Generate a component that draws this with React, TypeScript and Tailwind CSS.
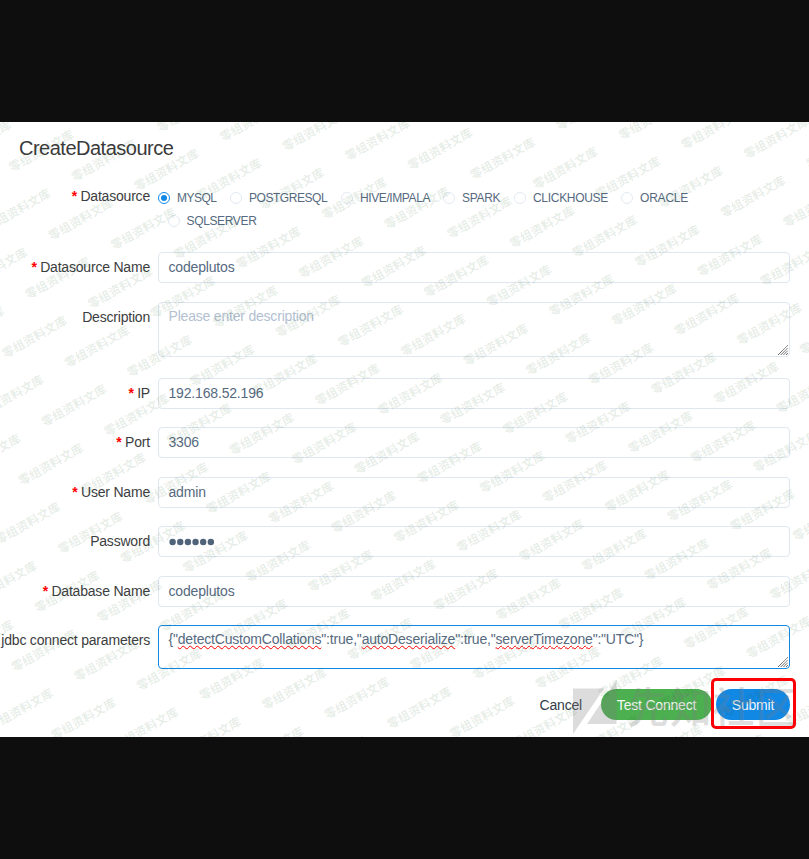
import React from "react";

function Radio({
  label,
  checked,
  className,
  tracking,
}: {
  label: string;
  checked?: boolean;
  className: string;
  tracking: string;
}) {
  return (
    <label className={`flex h-[22.5px] shrink-0 items-center ${className}`}>
      <span
        className={`mr-[7px] flex size-3 shrink-0 items-center justify-center rounded-full border ${
          checked ? "border-[#1288e5]" : "border-[#e3eaf3]"
        }`}
      >
        {checked && <span className="size-1.5 rounded-full bg-[#1288e5]" />}
      </span>
      <span className={`whitespace-nowrap text-[12px] text-[#566a80] ${tracking}`}>{label}</span>
    </label>
  );
}

function Row({
  label,
  required,
  className,
  children,
}: {
  label: string;
  required?: boolean;
  className: string;
  children: React.ReactNode;
}) {
  return (
    <div className={`flex items-start ${className}`}>
      <div className="flex h-[30px] w-[158px] shrink-0 items-center justify-end whitespace-nowrap pr-[8px] text-[14px] tracking-[-0.2px] text-[#3c3d40]">
        {required && <span className="mr-[3.5px] font-bold text-[#f00]">*</span>}
        {label}
      </div>
      {children}
    </div>
  );
}

function Field({ value }: { value: string }) {
  return (
    <div className="mr-[19px] flex h-[31px] flex-1 items-center rounded-[4px] border border-[#dfe7f1] px-[9.5px] text-[14px] tracking-[-0.17px] text-[#566a80]">
      {value}
    </div>
  );
}

function PasswordField({ length }: { length: number }) {
  return (
    <div className="mr-[19px] flex h-[31px] flex-1 items-center rounded-[4px] border border-[#dfe7f1] px-[10px] pt-[1px]">
      <svg width="46" height="8" viewBox="0 0 46 8" fill="#4f6379">
        {Array.from({ length }, (_, i) => (
          <circle key={i} cx={3.6 + i * 7.65} cy="4" r="3.2" />
        ))}
      </svg>
    </div>
  );
}

function Grip() {
  return (
    <svg className="absolute bottom-[1px] right-[1px]" width="10" height="10" viewBox="0 0 10 10">
      <path
        d="M0 10L10 0M2.7 10L10 2.7M5.4 10L10 5.4M8 10L10 8"
        stroke="#555"
        strokeWidth="1"
        strokeDasharray="1.2 0.3"
        fill="none"
      />
    </svg>
  );
}

function Typo({ children }: { children: string }) {
  return (
    <span className="underline decoration-[#f00] decoration-wavy decoration-[1.4px] underline-offset-[1px] [text-decoration-skip-ink:none]">
      {children}
    </span>
  );
}

const marks: [number, number][] = [];
for (let b = -3; b < 13; b++) {
  for (let a = -6; a < 22; a++) {
    const x = 15 + a * 62.6 - b * 23.15;
    const y = 43.3 + a * 9.52 + b * 58.9;
    if (x > -70 && x < 815 && y > -8 && y < 650) marks.push([x, y]);
  }
}

function Watermark() {
  return (
    <svg className="pointer-events-none absolute inset-0" width="809" height="615" viewBox="0 0 809 615">
      <g
        fill="rgba(20,85,30,0.115)"
        fontFamily="'Noto Sans CJK SC', sans-serif"
        fontSize="12"
        fontWeight="700"
      >
        {marks.map(([x, y]) => (
          <text key={`${x},${y}`} transform={`translate(${x} ${y}) rotate(-29.3)`} x="-6" y="4.6">
            零组资料文库
          </text>
        ))}
      </g>
      <g fill="rgba(125,125,125,0.27)">
        <path d="M573 566.5H604L573 612Z" />
        <path d="M587 602L616.5 558V602Z" />
        <text
          x="627"
          y="601"
          fontSize="42"
          fontWeight="500"
          letterSpacing="0.8"
          fontFamily="'Noto Sans CJK SC', sans-serif"
        >
          先知社区
        </text>
      </g>
    </svg>
  );
}

export default function App() {
  return (
    <div className="flex h-[859px] w-[809px] flex-col bg-[#0e0e0e] pt-[122px] font-['Liberation_Sans',Arial,sans-serif]">
      <main className="relative flex h-[615px] flex-col overflow-hidden bg-white">
        <h1 className="ml-[19px] mt-[14px] h-6 text-[20px] leading-6 tracking-[-0.5px] text-[#3a3a3a]">
          CreateDatasource
        </h1>

        <Row label="Datasource" required className="mt-[21px] h-[71px]">
          <div className="mt-[6px] flex flex-1 flex-col">
            <div className="flex">
              <Radio label="MYSQL" checked className="w-[72px]" tracking="tracking-[-0.5px]" />
              <Radio label="POSTGRESQL" className="w-[111px]" tracking="tracking-[-0.45px]" />
              <Radio label="HIVE/IMPALA" className="w-[102px]" tracking="tracking-[-0.4px]" />
              <Radio label="SPARK" className="w-[71px]" tracking="tracking-[-0.3px]" />
              <Radio label="CLICKHOUSE" className="w-[107px]" tracking="tracking-[-0.3px]" />
              <Radio label="ORACLE" className="" tracking="tracking-[-0.2px]" />
            </div>
            <Radio label="SQLSERVER" className="ml-[9.5px]" tracking="tracking-[-0.35px]" />
          </div>
        </Row>

        <Row label="Datasource Name" required className="h-[50px]">
          <Field value="codeplutos" />
        </Row>
        <Row label="Description" className="h-[76px]">
          <div className="relative mr-[19px] h-[55px] flex-1 rounded-[4px] border border-[#dfe7f1] px-[9.5px] pt-[4px] text-[14px] leading-[18px] tracking-[-0.2px] text-[#b3c0d1]">
            Please enter description
            <Grip />
          </div>
        </Row>
        <Row label="IP" required className="h-[49px]">
          <Field value="192.168.52.196" />
        </Row>
        <Row label="Port" required className="h-[50px]">
          <Field value="3306" />
        </Row>
        <Row label="User Name" required className="h-[49px]">
          <Field value="admin" />
        </Row>
        <Row label="Password" className="h-[50px]">
          <PasswordField length={6} />
        </Row>
        <Row label="Database Name" required className="h-[49px]">
          <Field value="codeplutos" />
        </Row>
        <Row label="jdbc connect parameters" className="h-[64px]">
          <div className="relative mr-[19px] h-[44px] flex-1 whitespace-nowrap rounded-[4px] border border-[#1288e5] px-[9.5px] pt-[4px] text-[14px] leading-[18px] tracking-[-0.195px] text-[#566a80]">
            {'{"'}
            <Typo>detectCustomCollations</Typo>
            {'":true,"'}
            <Typo>autoDeserialize</Typo>
            {'":true,"'}
            <Typo>serverTimezone</Typo>
            {'":"UTC"}'}
            <Grip />
          </div>
        </Row>

        <div className="mr-[19px] flex h-[31px] shrink-0 items-center justify-end text-[14px] tracking-[-0.2px]">
          <button className="mr-[19px] pt-px text-[#333c48]">Cancel</button>
          <button className="mr-1 h-[31px] w-[111px] rounded-full bg-[#4caf50] pt-px text-[#f3f8f3]">Test Connect</button>
          <button className="h-[31px] w-[74px] rounded-full bg-[#1288e5] pt-px text-[#f0f6fb]">Submit</button>
        </div>

        <Watermark />
        <div className="absolute left-[711px] top-[556px] h-[51px] w-[85px] rounded-[5px] border-[3px] border-[#fb0007]" />
      </main>
    </div>
  );
}
